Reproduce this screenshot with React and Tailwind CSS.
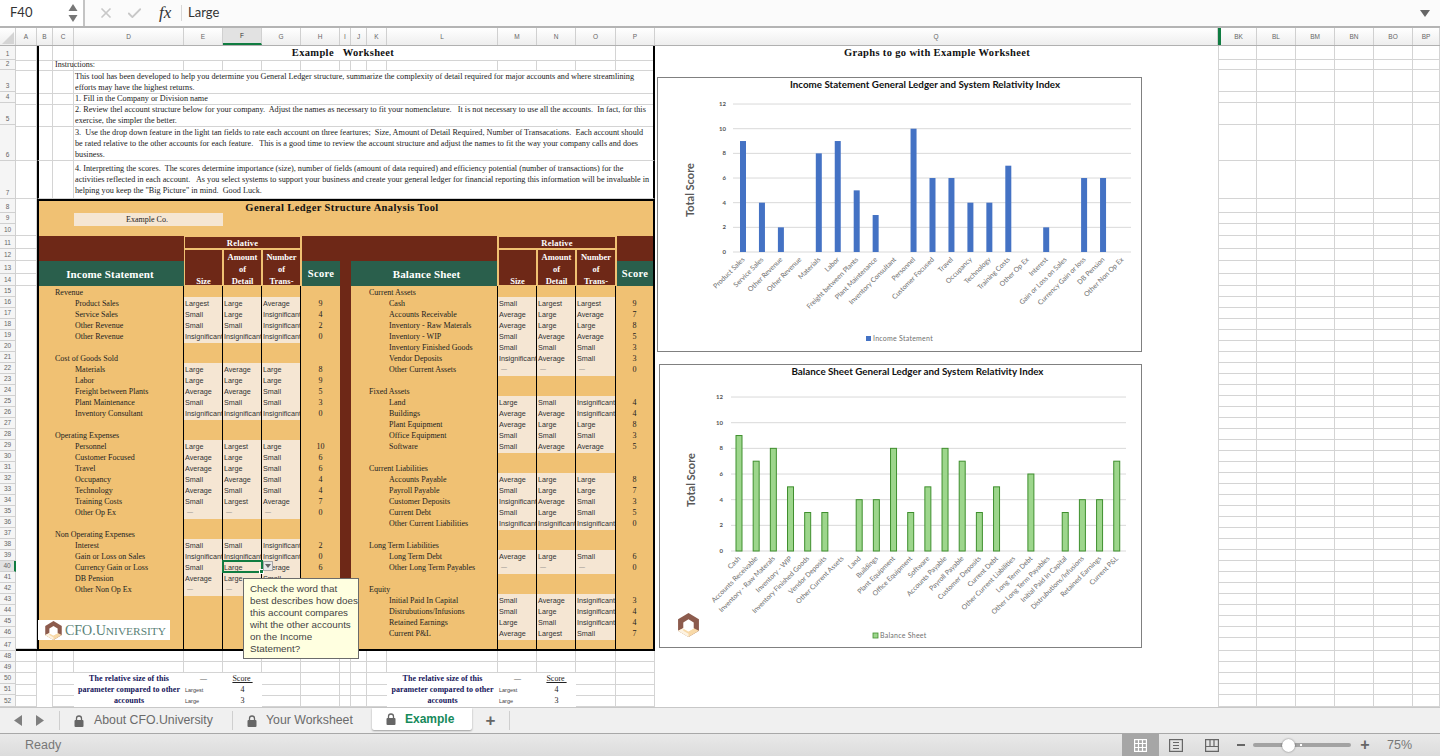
import React from "react";
import { X, Check } from "lucide-react";

const SERIF = "[font-family:'Liberation_Serif','Times_New_Roman',serif]";
const GRID =
  "grid grid-cols-[21px_16px_21px_110px_39px_39px_39px_39px_11px_16px_20px_111px_39px_39px_40px_39px]";
const LINE = "border-r border-b border-[#d4d4d4]";

const COL_LABELS = ["A", "B", "C", "D", "E", "F", "G", "H", "I", "J", "K", "L", "M", "N", "O", "P", "Q", "BK", "BL", "BM", "BN", "BO", "BP"];

// row heights of the sheet, row 1 first
const ROW_H = {
  1: "h-[14px]", 2: "h-[10px]", 3: "h-[22px]", 4: "h-[11px]", 5: "h-[22px]", 6: "h-[36px]", 7: "h-[38px]",
  8: "h-[14px]", 9: "h-[11px]", 10: "h-[12px]", 11: "h-[13px]", 12: "h-[12px]", 13: "h-[13px]", 14: "h-[12px]",
  47: "h-[13px]", 52: "h-[12px]",
};
const rowH = (n) => ROW_H[n] || "h-[11px]";
const ROWS = Array.from({ length: 52 }, (_, i) => i + 1);

const I = "Insignificant";
const D = "—";

// left and right tables, by sheet row
const INCOME = {
  15: { cat: "Revenue" },
  16: { name: "Product Sales", v: ["Largest", "Large", "Average"], s: 9 },
  17: { name: "Service Sales", v: ["Small", "Large", I], s: 4 },
  18: { name: "Other Revenue", v: ["Small", "Small", I], s: 2 },
  19: { name: "Other Revenue", v: [I, I, I], s: 0 },
  21: { cat: "Cost of Goods Sold" },
  22: { name: "Materials", v: ["Large", "Average", "Large"], s: 8 },
  23: { name: "Labor", v: ["Large", "Large", "Large"], s: 9 },
  24: { name: "Freight between Plants", v: ["Average", "Average", "Small"], s: 5 },
  25: { name: "Plant Maintenance", v: ["Small", "Small", "Small"], s: 3 },
  26: { name: "Inventory Consultant", v: [I, I, I], s: 0 },
  28: { cat: "Operating Expenses" },
  29: { name: "Personnel", v: ["Large", "Largest", "Large"], s: 10 },
  30: { name: "Customer Focused", v: ["Average", "Large", "Small"], s: 6 },
  31: { name: "Travel", v: ["Average", "Large", "Small"], s: 6 },
  32: { name: "Occupancy", v: ["Small", "Average", "Small"], s: 4 },
  33: { name: "Technology", v: ["Average", "Small", "Small"], s: 4 },
  34: { name: "Training Costs", v: ["Small", "Largest", "Average"], s: 7 },
  35: { name: "Other Op Ex", v: [D, D, D], s: 0 },
  37: { cat: "Non Operating Expenses" },
  38: { name: "Interest", v: ["Small", "Small", I], s: 2 },
  39: { name: "Gain or Loss on Sales", v: [I, I, I], s: 0 },
  40: { name: "Currency Gain or Loss", v: ["Small", "Large", "Average"], s: 6 },
  41: { name: "DB Pension", v: ["Average", "Large", "Small"], s: "" },
  // G and H of this row lie under the prompt
  42: { name: "Other Non Op Ex", v: [D, D, ""], s: "" },
};

const BALANCE = {
  15: { cat: "Current Assets" },
  16: { name: "Cash", v: ["Small", "Largest", "Largest"], s: 9 },
  17: { name: "Accounts Receivable", v: ["Average", "Large", "Average"], s: 7 },
  18: { name: "Inventory - Raw Materals", v: ["Average", "Large", "Large"], s: 8 },
  19: { name: "Inventory - WIP", v: ["Small", "Average", "Average"], s: 5 },
  20: { name: "Inventory Finished Goods", v: ["Small", "Small", "Small"], s: 3 },
  21: { name: "Vendor Deposits", v: [I, "Average", "Small"], s: 3 },
  22: { name: "Other Current Assets", v: [D, D, D], s: 0 },
  24: { cat: "Fixed Assets" },
  25: { name: "Land", v: ["Large", "Small", I], s: 4 },
  26: { name: "Buildings", v: ["Average", "Average", I], s: 4 },
  27: { name: "Plant Equipment", v: ["Average", "Large", "Large"], s: 8 },
  28: { name: "Office Equipment", v: ["Small", "Small", "Small"], s: 3 },
  29: { name: "Software", v: ["Small", "Average", "Average"], s: 5 },
  31: { cat: "Current Liabilities" },
  32: { name: "Accounts Payable", v: ["Average", "Large", "Large"], s: 8 },
  33: { name: "Payroll Payable", v: ["Small", "Large", "Large"], s: 7 },
  34: { name: "Customer Deposits", v: [I, "Average", "Small"], s: 3 },
  35: { name: "Current Debt", v: ["Small", "Large", "Small"], s: 5 },
  36: { name: "Other Current Liabilities", v: [I, I, I], s: 0 },
  38: { cat: "Long Term Liabilities" },
  39: { name: "Long Term Debt", v: ["Average", "Large", "Small"], s: 6 },
  40: { name: "Other Long Term Payables", v: [D, D, D], s: 0 },
  42: { cat: "Equity" },
  43: { name: "Initial Paid In Capital", v: ["Small", "Average", I], s: 3 },
  44: { name: "Distrubutions/Infusions", v: ["Small", "Large", I], s: 4 },
  45: { name: "Retained Earnings", v: ["Large", "Small", I], s: 4 },
  46: { name: "Current P&L", v: ["Average", "Largest", "Small"], s: 7 },
};

const INCOME_CHART = [
  ["Product Sales", 9], ["Service Sales", 4], ["Other Revenue", 2], ["Other Revenue", 0], ["Materials", 8], ["Labor", 9],
  ["Freight between Plants", 5], ["Plant Maintenance", 3], ["Inventory Consultant", 0], ["Personnel", 10], ["Customer Focused", 6],
  ["Travel", 6], ["Occupancy", 4], ["Technology", 4], ["Training Costs", 7], ["Other Op Ex", 0], ["Interest", 2],
  ["Gain or Loss on Sales", 0], ["Currency Gain or loss", 6], ["DB Pension", 6], ["Other Non Op Ex", 0],
];

const BALANCE_CHART = [
  ["Cash", 9], ["Accounts Receivable", 7], ["Inventory - Raw Materals", 8], ["Inventory - WIP", 5], ["Inventory Finished Goods", 3],
  ["Vendor Deposits", 3], ["Other Current Assets", 0], ["Land", 4], ["Buildings", 4], ["Plant Equipment", 8], ["Office Equipment", 3],
  ["Software", 5], ["Accounts Payable", 8], ["Payroll Payable", 7], ["Customer Deposits", 3], ["Current Debt", 5],
  ["Other Current Liabilities", 0], ["Long Term Debt", 6], ["Other Long Term Payables", 0], ["Initial Paid In Capital", 3],
  ["Distrubutions/Infusions", 4], ["Retained Earnings", 4], ["Current P&L", 7],
];

const HexLogo = ({ className }) => (
  <svg viewBox="0 0 20 23" className={className}>
    <polygon points="10,0 20,6 20,17 10,23 0,17 0,6" fill="#8c5b4d" />
    <polygon points="0,17 10,12 20,17 10,23" fill="#f8d9a8" />
    <polygon points="0,17 10,12 10,23" fill="#fdf3e2" />
    <polygon points="10,6 15,9 15,15 10,18 5,15 5,9" fill="#ffffff" />
    <polygon points="5,15 10,18 15,15 15,17 10,20 5,17" fill="#f8d9a8" />
  </svg>
);

const Lock = ({ className = "fill-[#666666]" }) => (
  <svg viewBox="0 0 10 12" className={`h-[12px] w-[10px] ${className}`}>
    <rect x="0.5" y="5" width="9" height="7" rx="1" />
    <path d="M2.5 5.5V3.5a2.5 2.5 0 0 1 5 0v2" fill="none" stroke="#666666" strokeWidth="1.3" />
  </svg>
);

const FormulaBar = () => (
  <div className="flex h-[28px] items-stretch border-b-2 border-[#b4b4b4] bg-[#fbfbfb]">
    <div className="flex w-[85px] items-center justify-between border-r-2 border-[#c4c4c4] bg-white pl-[10px] pr-[4px] text-[13px] text-[#333333] [font-family:Lato,sans-serif]">
      F40
      <svg width="12" height="20" viewBox="0 0 12 20" className="fill-[#777777]">
        <path d="M6 1l4.5 7h-9z" />
        <path d="M6 19l-4.5-7h9z" />
      </svg>
    </div>
    <div className="flex w-[96px] items-center">
      <X size={16} strokeWidth={2.6} className="ml-[13px] text-[#c8c8c8]" />
      <Check size={17} strokeWidth={2.6} className="ml-[12px] text-[#c8c8c8]" />
      <span className={`${SERIF} ml-[16px] text-[17px] italic text-[#333333]`}>fx</span>
    </div>
    <div className="my-[5px] border-l border-[#d8d8d8]" />
    <div className="flex flex-1 items-center pl-[6px] text-[13px] text-[#333333] [font-family:Lato,sans-serif]">Large</div>
    <div className="flex w-[20px] items-center">
      <svg width="10" height="7" viewBox="0 0 10 7" className="fill-[#666666]"><path d="M0 0h10l-5 7z" /></svg>
    </div>
  </div>
);

const ColumnHeaders = () => (
  <div className="grid h-[18px] grid-cols-[16px_21px_16px_21px_110px_39px_39px_39px_39px_11px_16px_20px_111px_39px_39px_40px_39px_563px_39px_39px_39px_39px_39px_1fr] border-b border-[#b0b0b0] bg-gradient-to-b from-[#ffffff] to-[#eeeeee]">
    <div className="relative border-r border-[#d0d0d0]">
      <svg width="12" height="12" className="absolute bottom-[1px] right-[1px] fill-[#d4d4d4]"><path d="M12 0v12H0z" /></svg>
    </div>
    {COL_LABELS.map((c) =>
      c === "F" ? (
        <div key={c} className="flex items-center justify-center border-b-2 border-r border-b-[#107c41] border-r-[#d0d0d0] bg-[#e2e2e2] text-[6.5px] text-[#333333]">{c}</div>
      ) : c === "BK" ? (
        <div key={c} className="flex items-center justify-center border-l-[3px] border-r border-l-[#107c41] border-r-[#d0d0d0] text-[6.5px] text-[#666666]">{c}</div>
      ) : (
        <div key={c} className="flex items-center justify-center border-r border-[#d0d0d0] text-[6.5px] text-[#666666]">{c}</div>
      )
    )}
  </div>
);

const RowHeaders = () => (
  <div className="flex w-[16px] flex-col bg-[#f5f5f5]">
    {ROWS.map((n) => (
      <div
        key={n}
        className={`${rowH(n)} flex items-end justify-center border-b border-r border-[#d0d0d0] text-[6.5px] leading-[10px] text-[#666666] ${n === 40 ? "border-r-2 border-r-[#107c41] bg-[#e2e2e2]" : ""}`}
      >
        {n}
      </div>
    ))}
  </div>
);

const InstructionRow = ({ n, lines }) => (
  <div className={`${GRID} ${rowH(n)}`}>
    <div className={LINE} />
    <div className={`${LINE} border-l-2 border-l-black`} />
    <div className={LINE} />
    <div className={`col-span-13 whitespace-pre border-b border-r-2 border-b-[#d4d4d4] border-r-black pl-[1px] ${n > 5 ? "pt-[2px]" : "pt-[1px]"} ${SERIF} text-[8.2px] leading-[11px] text-[#222222]`}>
      {lines.map((l) => (
        <div key={l}>{l}</div>
      ))}
    </div>
  </div>
);

const Instructions = () => (
  <>
    <div className={`${GRID} ${rowH(1)}`}>
      <div className={LINE} />
      <div className={`${LINE} border-l-2 border-l-black`} />
      <div className={LINE} />
      <div className={`col-span-12 ${LINE} ${SERIF} pr-[3px] text-center text-[10.5px] font-bold leading-[14px] tracking-[0.35px] text-[#111111] whitespace-pre`}>Example   Worksheet</div>
      <div className="border-b border-r-2 border-b-[#d4d4d4] border-r-black" />
    </div>
    <div className={`${GRID} ${rowH(2)}`}>
      <div className={LINE} />
      <div className={`${LINE} border-l-2 border-l-black`} />
      <div className={`${LINE} ${SERIF} whitespace-nowrap pl-[2px] text-[8px] leading-[10px] text-[#222222]`}>Instructions:</div>
      {["D", "E", "F", "G", "H", "I", "J", "K", "L", "M", "N", "O"].map((c) => (
        <div key={c} className={LINE} />
      ))}
      <div className="border-b border-r-2 border-b-[#d4d4d4] border-r-black" />
    </div>
    <InstructionRow
      n={3}
      lines={[
        "This tool has been developed to help you determine you General Ledger structure, summarize the complexity of detail required for major accounts and where streamlining",
        "efforts may have the highest returns.",
      ]}
    />
    <InstructionRow n={4} lines={["1. Fill in the Company or Division name"]} />
    <InstructionRow
      n={5}
      lines={[
        "2. Review thel account structure below for your company.  Adjust the names as necessary to fit your nomenclature.   It is not necessary to use all the accounts.  In fact, for this",
        "exercise, the simpler the better.",
      ]}
    />
    <InstructionRow
      n={6}
      lines={[
        "3.  Use the drop down feature in the light tan fields to rate each account on three feartures;  Size, Amount of Detail Required, Number of Transacations.  Each account should",
        "be rated relative to the other accounts for each feature.   This is a good time to review the account structure and adjust the names to fit the way your company calls and does",
        "business.",
      ]}
    />
    <InstructionRow
      n={7}
      lines={[
        "4. Interpretting the scores.  The scores determine importance (size), number of fields (amount of data required) and efficiency potential (number of transactions) for the",
        "activities reflected in each account.   As you select systems to support your business and create your general ledger for financial reporting this information will be invaluable in",
        'helping you keep the "Big Picture" in mind.  Good Luck.',
      ]}
    />
  </>
);

const PanelTop = () => (
  <>
    <div className={`${GRID} ${rowH(8)}`}>
      <div className={`${LINE} bg-white`} />
      <div className={`col-span-15 border-x-2 border-t-2 border-black bg-[#f0c173] pr-[8px] text-center ${SERIF} text-[10.5px] font-bold leading-[14px] tracking-[0.4px] text-[#111111]`}>
        General Ledger Structure Analysis Tool
      </div>
    </div>
    <div className={`${GRID} ${rowH(9)} bg-[#f0c173]`}>
      <div className={`${LINE} bg-white`} />
      <div className="col-span-2 border-l-2 border-black" />
      <div className={`col-span-2 bg-[#f5e6d3] pr-[3px] text-center ${SERIF} text-[8px] leading-[13px] text-[#222222]`}>Example Co.</div>
      <div className="col-span-11 border-r-2 border-black" />
    </div>
    <div className={`${GRID} ${rowH(10)} bg-[#f0c173]`}>
      <div className={`${LINE} bg-white`} />
      <div className="col-span-15 border-x-2 border-black" />
    </div>
  </>
);

const HEAD = `${SERIF} font-bold text-white`;

const RelativeHead = ({ start }) => (
  <>
    <div className={`${start === 5 ? "col-start-5" : "col-start-13"} col-span-3 row-start-1 m-[1px] bg-[#6e2817] text-center text-[8.5px] leading-[12px] tracking-[0.2px] ${HEAD}`}>Relative</div>
    <div className={`${start === 5 ? "col-start-5" : "col-start-13"} row-start-2 row-span-3 m-[1px] flex flex-col items-center bg-[#6e2817] pt-[25px] text-[8.5px] leading-[12px] ${HEAD}`}>
      <span>Size</span>
    </div>
    <div className={`${start === 5 ? "col-start-6" : "col-start-14"} row-start-2 row-span-3 m-[1px] flex flex-col items-center bg-[#6e2817] pt-[1px] text-[8.5px] leading-[12px] ${HEAD}`}>
      <span>Amount</span>
      <span>of</span>
      <span>Detail</span>
    </div>
    <div className={`${start === 5 ? "col-start-7" : "col-start-15"} row-start-2 row-span-3 m-[1px] flex flex-col items-center bg-[#6e2817] pt-[1px] text-[8.5px] leading-[12px] ${HEAD}`}>
      <span>Number</span>
      <span>of</span>
      <span>Trans-</span>
    </div>
  </>
);

const TableHead = () => (
  <div className={`${GRID} h-[50px] grid-rows-[13px_12px_13px_12px] bg-[#f0c173]`}>
    <div className="col-start-1 row-span-4 row-start-1 flex flex-col bg-white">
      <div className={`${LINE} h-[13px]`} />
      <div className={`${LINE} h-[12px]`} />
      <div className={`${LINE} h-[13px]`} />
      <div className={`${LINE} h-[12px]`} />
    </div>
    <div className="col-span-3 col-start-2 row-span-2 row-start-1 border-l-2 border-black bg-[#6e2817]" />
    <div className={`col-span-3 col-start-2 row-span-2 row-start-3 flex items-center justify-center border-l-2 border-black bg-[#2a5f4c] pr-[3px] pt-[1px] text-[11px] tracking-[0.15px] ${HEAD}`}>Income Statement</div>
    <RelativeHead start={5} />
    <div className="col-start-8 row-span-2 row-start-1 ml-[1px] bg-[#6e2817]" />
    <div className={`col-start-8 row-span-2 row-start-3 ml-[1px] flex items-center justify-center bg-[#2a5f4c] pt-[1px] text-[10.5px] tracking-[0.3px] ${HEAD}`}>Score</div>
    <div className="col-start-9 row-span-4 row-start-1 bg-[#6e2817]" />
    <div className="col-span-3 col-start-10 row-span-2 row-start-1 mr-[1px] bg-[#6e2817]" />
    <div className={`col-span-3 col-start-10 row-span-2 row-start-3 mr-[1px] flex items-center justify-center bg-[#2a5f4c] pl-[5px] pt-[1px] text-[11px] tracking-[0.15px] ${HEAD}`}>Balance Sheet</div>
    <RelativeHead start={13} />
    <div className="col-start-16 row-span-2 row-start-1 ml-[1px] border-r-2 border-black bg-[#6e2817]" />
    <div className={`col-start-16 row-span-2 row-start-3 ml-[1px] flex items-center justify-center border-r-2 border-black bg-[#2a5f4c] pt-[1px] text-[10.5px] tracking-[0.3px] ${HEAD}`}>Score</div>
  </div>
);

const ValueCell = ({ v }) => (
  <div className={`overflow-hidden whitespace-nowrap border-r border-black leading-[13px] ${v !== undefined ? "bg-[#f5e6d3]" : ""} ${v === D ? "pl-[3px] text-[6px] text-[#777777]" : "pl-[1px] text-[7.2px] text-[#333333]"}`}>
    {v}
  </div>
);

const PanelRow = ({ n }) => {
  const l = INCOME[n] || {};
  const r = BALANCE[n] || {};
  const lv = l.v || [];
  const rv = r.v || [];
  const text = `${SERIF} whitespace-nowrap text-[8px] leading-[13px] text-[#222222]`;
  return (
    <div className={`${GRID} ${rowH(n)} bg-[#f0c173] ${n === 47 ? "border-b-2 border-black" : ""}`}>
      <div className={`${LINE} bg-white`} />
      <div className="border-l-2 border-black" />
      <div className={`${text} pl-[2px]`}>{l.cat}</div>
      <div className={`${text} border-r border-black pl-[1px]`}>{l.name}</div>
      <ValueCell v={lv[0]} />
      <ValueCell v={lv[1]} />
      <ValueCell v={lv[2]} />
      <div className={`${text} text-center`}>{l.s}</div>
      <div className="bg-[#6e2817]" />
      <div />
      <div className={`${text} pl-[2px]`}>{r.cat}</div>
      <div className={`${text} border-r border-black pl-[2px]`}>{r.name}</div>
      <ValueCell v={rv[0]} />
      <ValueCell v={rv[1]} />
      <ValueCell v={rv[2]} />
      <div className={`${text} border-r-2 border-black text-center`}>{r.s}</div>
    </div>
  );
};

const PlainRow = ({ n }) => (
  <div className={`${GRID} ${rowH(n)}`}>
    {["A", "B", "C", "D", "E", "F", "G", "H", "I", "J", "K", "L", "M", "N", "O", "P"].map((c) => (
      <div key={c} className={c === "B" && n === 49 ? "border-r border-[#d4d4d4]" : LINE} />
    ))}
  </div>
);

const NOTE = `${SERIF} whitespace-nowrap text-center text-[8px] font-bold leading-[12px] tracking-[0.05px] text-[#14145a]`;

const NoteCells = ({ text, a, b, head }) => (
  <>
    <div className={NOTE}>{text}</div>
    <div className={head ? "text-center text-[7px] leading-[11px] text-[#666666]" : "pl-[1px] text-[5.5px] leading-[12px] text-[#444444]"}>{a}</div>
    <div className={`${SERIF} whitespace-pre text-center text-[8px] leading-[12px] text-[#222222] ${head ? "underline" : ""}`}>{b}</div>
  </>
);

const NoteRow = ({ n, text, a, b, head }) => (
  <div className={`${GRID} ${rowH(n)}`}>
    <div className={LINE} />
    <div className="border-r border-[#d4d4d4]" />
    <div className="border-b border-[#d4d4d4]" />
    <NoteCells text={text} a={a} b={b} head={head} />
    <div className={LINE} />
    <div className={LINE} />
    <div className={LINE} />
    <div className={LINE} />
    <div className="border-b border-[#d4d4d4]" />
    <NoteCells text={text} a={a} b={b} head={head} />
    <div className={LINE} />
    <div className={LINE} />
  </div>
);

const Worksheet = () => (
  <div className="relative w-[639px]">
    <Instructions />
    <PanelTop />
    <TableHead />
    {ROWS.filter((n) => n >= 15 && n <= 47).map((n) => (
      <PanelRow key={n} n={n} />
    ))}
    <PlainRow n={48} />
    <PlainRow n={49} />
    <NoteRow n={50} text="The relative size of this" a={D} b="Score " head />
    <NoteRow n={51} text="parameter compared to other" a="Largest" b="4" />
    <NoteRow n={52} text="accounts" a="Large" b="3" />

    {/* logo over the panel */}
    <div className="absolute left-[22px] top-[574px] flex h-[20px] w-[132px] items-center bg-white pl-[7px]">
      <HexLogo className="h-[19px] w-[17px] shrink-0" />
      <span className={`${SERIF} ml-[3px] whitespace-nowrap text-[#5a7f76]`}>
        <span className="text-[14px]">CFO.U</span>
        <span className="text-[11.4px]">NIVERSITY</span>
      </span>
    </div>

    {/* selected cell F40 */}
    <div className="absolute left-[206px] top-[514px] h-[13px] w-[41px] border-2 border-[#107c41]">
      <div className="absolute -bottom-[3px] -right-[3px] h-[5px] w-[5px] border border-white bg-[#107c41]" />
    </div>
    <div className="absolute left-[247px] top-[515px] flex h-[10px] w-[10px] items-center justify-center border border-[#a8a8a8] bg-[#e8e8e8]">
      <svg width="6" height="4" viewBox="0 0 6 4" className="fill-[#666666]"><path d="M0 0h6l-3 4z" /></svg>
    </div>

    {/* data validation prompt */}
    <div className="absolute left-[227px] top-[532px] h-[81px] w-[116px] border border-[#6b6b6b] bg-[#ffffe0] px-[6px] pt-[4px] text-[9.8px] leading-[12px] text-[#444444]">
      <div className="whitespace-nowrap">Check the word that</div>
      <div className="whitespace-nowrap">best describes how does</div>
      <div className="whitespace-nowrap">this account compares</div>
      <div className="whitespace-nowrap">wiht the other accounts</div>
      <div className="whitespace-nowrap">on the Income</div>
      <div className="whitespace-nowrap">Statement?</div>
    </div>
  </div>
);

const BarChart = ({ title, titleClass, data, box, firstX, step, zero, unit, gridL, gridR, tickX, fill, stroke, legend, axisY, legendY, legendX, scoreX }) => (
  <>
    <div className={`h-[14px] text-center text-[9.8px] font-bold leading-[13px] text-[#111111] [font-family:Lato,sans-serif] ${titleClass}`}>{title}</div>
    <svg viewBox={box.join(" ")} className="block" width={box[2]} height={box[3]}>
      <g className="[font-family:Lato,sans-serif]">
        {[0, 2, 4, 6, 8, 10, 12].map((t) => (
          <g key={t}>
            <line x1={gridL} x2={gridR} y1={zero - t * unit} y2={zero - t * unit} stroke="#d9d9d9" strokeWidth="1" />
            <text x={tickX} y={zero - t * unit + 2} textAnchor="end" fontSize="6" fontWeight="700" fill="#555555">{t}</text>
          </g>
        ))}
        {data.map(([label, v], i) => {
          const cx = firstX + i * step;
          return (
            <g key={`${label}-${i}`}>
              {v > 0 && (
                <rect x={cx - 3} y={zero - v * unit} width="6" height={v * unit} fill={fill} stroke={stroke} strokeWidth={stroke ? 1 : 0} />
              )}
              <text x={cx + 2} y={zero + 8} textAnchor="end" fontSize="6.9" fill="#707070" transform={`rotate(-45 ${cx + 2} ${zero + 8})`}>
                {label}
              </text>
            </g>
          );
        })}
        <text x={scoreX} y={axisY} textAnchor="middle" fontSize="11" fontWeight="700" fill="#595959" transform={`rotate(-90 ${scoreX} ${axisY})`}>Total Score</text>
        <rect x={legendX} y={legendY - 3} width="5" height="5" fill={fill} stroke={stroke} strokeWidth={stroke ? 0.8 : 0} />
        <text x={legendX + 7} y={legendY + 2} fontSize="7" letterSpacing="0.25" fill="#707070">{legend}</text>
      </g>
    </svg>
  </>
);

const Charts = () => (
  <div className="flex w-[563px] flex-col bg-white">
    <div className={`${SERIF} h-[14px] pl-[1px] text-center text-[10.5px] font-bold leading-[14px] tracking-[0.35px] text-[#111111]`}>Graphs to go with Example Worksheet</div>
    <div className="ml-[2px] mt-[17px] h-[275px] w-[485px] border border-[#808080]">
      <BarChart
        title="Income Statement General Ledger and System Relativity Index"
        titleClass="pl-[51px]"
        data={INCOME_CHART}
        box={[658, 92, 483, 259]}
        firstX={743}
        step={18.95}
        zero={252}
        unit={12.33}
        gridL={733}
        gridR={1131}
        tickX={726}
        fill="#4472c4"
        legend="Income Statement"
        axisY={190}
        scoreX={694}
        legendX={866}
        legendY={339}
      />
    </div>
    <div className="ml-[4px] mt-[12px] h-[284px] w-[483px] border border-[#808080]">
      <BarChart
        title="Balance Sheet General Ledger and System Relativity Index"
        titleClass="pl-[34px]"
        data={BALANCE_CHART}
        box={[660, 379, 481, 268]}
        firstX={739}
        step={17.17}
        zero={551}
        unit={12.83}
        gridL={731}
        gridR={1126}
        tickX={723}
        fill="#9dd68c"
        stroke="#3f8f2e"
        legend="Balance Sheet"
        axisY={480}
        scoreX={695}
        legendX={873}
        legendY={636}
      />
      <div className="relative">
        <HexLogo className="absolute bottom-[10px] left-[18px] h-[24px] w-[21px]" />
      </div>
    </div>
  </div>
);

const EmptyColumns = () => (
  <div className="flex-1 bg-white">
    {ROWS.map((n) => (
      <div key={n} className={`grid grid-cols-[39px_39px_39px_39px_39px_1fr] ${rowH(n)}`}>
        {["BK", "BL", "BM", "BN", "BO", "BP"].map((c) => (
          <div key={c} className={`${LINE} ${c === "BK" ? "border-l" : ""}`} />
        ))}
      </div>
    ))}
  </div>
);

const SheetTabs = () => (
  <div className="flex h-[26px] items-stretch border-t border-[#c8c8c8] bg-[#f0f0f0] text-[12.3px] text-[#6b6b6b]">
    <div className="my-[3px] flex w-[60px] items-center gap-[14px] border-r border-[#cfcfcf] pl-[14px]">
      <svg width="8" height="11" viewBox="0 0 8 11" className="fill-[#7f7f7f]"><path d="M8 0v11L0 5.5z" /></svg>
      <svg width="8" height="11" viewBox="0 0 8 11" className="fill-[#7f7f7f]"><path d="M0 0v11l8-5.5z" /></svg>
    </div>
    <div className="my-[3px] flex w-[173px] items-center border-r border-[#cfcfcf] pl-[14px]">
      <Lock />
      <span className="ml-[10px]">About CFO.University</span>
    </div>
    <div className="my-[3px] flex w-[139px] items-center pl-[14px]">
      <Lock />
      <span className="ml-[9px]">Your Worksheet</span>
    </div>
    <div className="mb-[3px] flex w-[100px] items-center rounded-b-[2px] bg-white pl-[14px] shadow-[0_1px_2px_rgba(0,0,0,0.35)]">
      <Lock />
      <span className="ml-[9px] text-[12px] font-bold text-[#168a5b]">Example</span>
    </div>
    <div className="my-[3px] flex w-[38px] items-center justify-center border-r border-[#cfcfcf] text-[17px] font-bold leading-none text-[#666666]">+</div>
  </div>
);

const StatusBar = () => (
  <div className="flex h-[23px] items-stretch border-t border-[#a8a8a8] bg-gradient-to-b from-[#e9e9e9] to-[#dcdcdc] text-[#777777]">
    <div className="flex w-[1122px] items-center pl-[25px] text-[12.5px]">Ready</div>
    <div className="flex w-[37px] items-center justify-center bg-[#a6a6a6]">
      <svg width="13" height="13" viewBox="0 0 13 13" fill="none" stroke="#ffffff" strokeWidth="1.2">
        <rect x="0.6" y="0.6" width="11.8" height="11.8" />
        <path d="M4.5 0.6v11.8M8.5 0.6v11.8M0.6 4.5h11.8M0.6 8.5h11.8" />
      </svg>
    </div>
    <div className="flex w-[34px] items-center justify-center">
      <svg width="14" height="13" viewBox="0 0 14 13" fill="none" stroke="#666666" strokeWidth="1.2">
        <rect x="0.6" y="0.6" width="12.8" height="11.8" />
        <path d="M4 3.5h6M4 6.5h6M4 9.5h6" />
      </svg>
    </div>
    <div className="flex w-[37px] items-center justify-center">
      <svg width="14" height="13" viewBox="0 0 14 13" fill="none" stroke="#666666" strokeWidth="1.2">
        <path d="M0.6 0.6h12.8v11.8H0.6zM0.6 7.5h12.8M5 0.6v6.9M9 0.6v6.9" />
      </svg>
    </div>
    <div className="ml-[7px] flex w-[11px] items-center">
      <div className="h-[2px] w-[8px] bg-[#666666]" />
    </div>
    <div className="relative ml-[5px] flex w-[98px] items-center">
      <div className="h-[4px] w-full rounded-full bg-[#a2a2a2]" />
      <div className="absolute left-[47px] h-[2px] w-[2px] bg-white" />
      <div className="absolute left-[29px] h-[13px] w-[13px] rounded-full bg-white shadow-[0_0_2px_rgba(0,0,0,0.5)]" />
    </div>
    <div className="ml-[8px] w-[12px] text-center text-[16px] font-bold leading-[21px] text-[#666666]">+</div>
    <div className="ml-[16px] flex items-center text-[12.5px]">75%</div>
  </div>
);

export default function App() {
  return (
    <div className="flex h-[756px] w-[1440px] flex-col overflow-hidden bg-white [font-family:'Liberation_Sans',Arial,sans-serif]">
      <FormulaBar />
      <ColumnHeaders />
      <div className="flex h-[661px]">
        <RowHeaders />
        <Worksheet />
        <Charts />
        <EmptyColumns />
      </div>
      <SheetTabs />
      <StatusBar />
    </div>
  );
}
